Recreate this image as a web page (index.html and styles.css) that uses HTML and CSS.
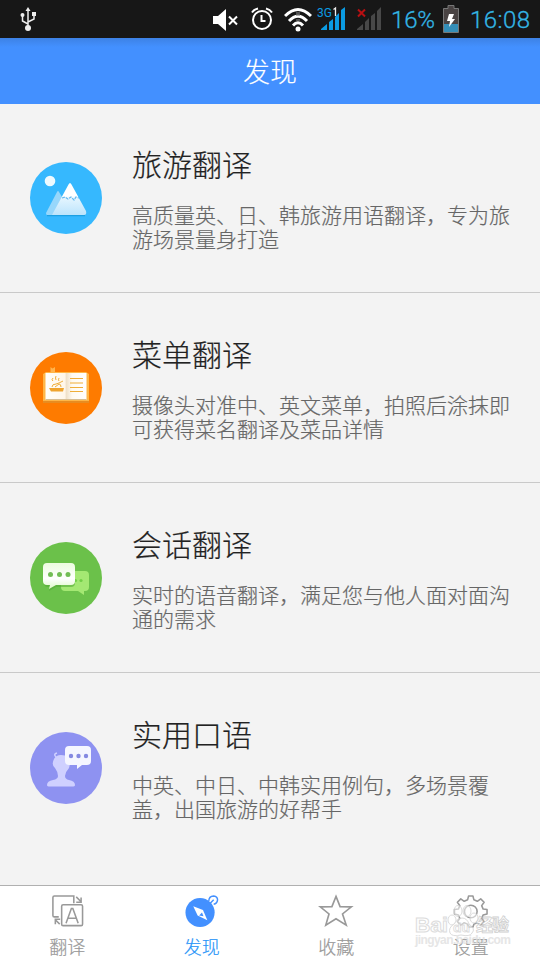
FILE: index.html
```
<!DOCTYPE html>
<html lang="zh-CN">
<head>
<meta charset="utf-8">
<title>发现</title>
<link rel="stylesheet" href="styles.css">
</head>
<body>
<div class="phone">
  <div class="status">
    <svg class="usb" width="18" height="26" viewBox="0 0 18 26" fill="none" stroke="#eee" stroke-width="1.5">
      <path d="M9 22V4M9 18L3.500 15V9M9 16L15 13V8"/><path d="M9 1L6.500 5h5z" fill="#eee" stroke="none"/><circle cx="9" cy="22" r="3" fill="#eee" stroke="none"/><circle cx="3.500" cy="9" r="2" fill="#eee" stroke="none"/><path d="M13 6h4v4h-4z" fill="#eee" stroke="none"/>
    </svg>
    <svg class="mute" width="25" height="24" viewBox="0 0 25 24">
      <path d="M0 8h5l8-7v22l-8-7H0z" fill="#fff"/><path d="M16 8.500l8 8M24 8.500l-8 8" stroke="#fff" stroke-width="2"/>
    </svg>
    <svg class="alarm" width="22" height="24" viewBox="0 0 22 24" fill="none" stroke="#fff" stroke-width="2">
      <circle cx="11" cy="13" r="9"/><path d="M10.500 8v6h4M1 5.500Q3 2.500 7 1.500M21 5.500Q19 2.500 15 1.500"/>
    </svg>
    <svg class="wifi" width="28" height="25" viewBox="0 0 28 25" fill="none" stroke="#fff" stroke-width="3">
      <path d="M1 9Q14-4 27 9M5 14Q14 4.500 23 14M9 18.500Q14 13 19 18.500"/><circle cx="14" cy="22" r="2.500" fill="#fff" stroke="none"/><path d="M12 5h4v4h-4zM12 12h4v2h-4z" fill="#777" stroke="none" opacity=".6"/>
    </svg>
    <svg class="signal" width="29" height="26" viewBox="0 0 29 26">
      <path d="M4 25v-1l6-5v6zM12 25v-8l4-3v11zM18 25V12l4-4v17zM24 25V5l4-3v23z" fill="#0b9be2"/>
      <text x="0" y="12" class="net" textLength="15">3G</text><path d="M16.500 4.500l2-1.500v8" fill="none" stroke="#eee" stroke-width="1.300"/>
    </svg>
    <svg class="nosignal" width="25" height="26" viewBox="0 0 25 26">
      <path d="M0 25v-1l6-5v6zM8 25v-8l4-4v12zM14 25V11l4-3v17zM20 25V6l4-4v23z" fill="#484848"/><path d="M1 4.500l7 7M8 4.500l-7 7" stroke="#b80f12" stroke-width="2"/>
    </svg>
    <svg class="percent" width="46" height="32"><text x="0" y="24" class="clock" textLength="44">16%</text></svg>
    <svg class="battery" width="16" height="28" viewBox="0 0 16 28">
      <path d="M5 .5h6v3h4.500v24H.5v-24H5z" fill="#494343" stroke="#777" /><path d="M1 19h14v8H1z" fill="#348eb8"/><path d="M6 9h5l-2 5h3l-6 8 1-6H4z" fill="#fff"/>
    </svg>
    <svg class="time" width="66" height="32"><text x="0" y="24" class="clock" textLength="60">16:08</text></svg>
  </div>
  <header class="header">发现</header>
  <main class="list">
    <section class="row">
      <svg class="badge" viewBox="0 0 72 72">
        <defs><linearGradient id="snow" x2="0" y2="1"><stop stop-color="#fff"/><stop offset=".4" stop-color="#fff"/><stop offset=".5" stop-color="#e2f4fe"/><stop offset="1" stop-color="#bce4fc"/></linearGradient></defs>
        <circle cx="36" cy="36" r="36" fill="#36b8fe"/><circle cx="20" cy="19" r="5.300" fill="#eefaff"/>
        <path d="M17 53q-1 0-1-2l11-21q1-2 2 0l6 10-7 13z" fill="#97d7fb"/>
        <path d="M38.500 22.500q1.500-3 3 0L56 49q1 4-2 4H22z" fill="url(#snow)"/><path d="M17 53.700h38" stroke="#179bdd" stroke-width="1"/>
        <path d="M32 36l3-1 3 2 3-2 3 3 2-3 3 1" fill="none" stroke="#66baf0" stroke-width="1.300" stroke-dasharray="3 1"/>
      </svg>
      <div class="copy"><h2>旅游翻译</h2><p>高质量英、日、韩旅游用语翻译，专为旅<br>游场景量身打造</p></div>
    </section>
    <section class="row">
      <svg class="badge" viewBox="0 0 72 72">
        <defs><linearGradient id="page"><stop stop-color="#fffefa"/><stop offset=".48" stop-color="#fff6e8"/><stop offset=".5" stop-color="#eedfc6"/><stop offset=".65" stop-color="#fffaf1"/><stop offset="1" stop-color="#fff"/></linearGradient></defs>
        <circle cx="36" cy="36" r="36" fill="#fe7b00"/><path d="M20.500 15l2 1.500 2.500-1.500v7h-4.500z" fill="#ffb44d"/>
        <path d="M13 22l3-2h40l3 2v29H13z" fill="#ffb647"/><path d="M13 49h46v2H13z" fill="#e78c21"/><path d="M15.500 21h41v27h-41z" fill="url(#page)"/><path d="M15.500 47.500h41" stroke="#d7bd91"/>
        <path d="M40 26.500h13M40 31h13M40 35.500h13M40 39.500h13" stroke="#efae39" stroke-width="1.100"/>
        <path d="M19 36h15l-1 3.500H21z" fill="#efa42e"/><path d="M22 35q0-3 4-3l3-1 4-2M25 35l4-3q2 0 2 3M23 29q-2-1 0-3M26 28q-1-2 0-4M29 29q-1-1 0-3" fill="none" stroke="#efae39"/>
      </svg>
      <div class="copy"><h2>菜单翻译</h2><p>摄像头对准中、英文菜单，拍照后涂抹即<br>可获得菜名翻译及菜品详情</p></div>
    </section>
    <section class="row">
      <svg class="badge" viewBox="0 0 72 72">
        <defs><linearGradient id="mint" x2="0" y2="1"><stop stop-color="#ecfcdf"/><stop offset=".6" stop-color="#fff"/><stop offset="1" stop-color="#dcf8c4"/></linearGradient></defs>
        <circle cx="36" cy="36" r="36" fill="#6bc14a"/>
        <path d="M35 29h20q4 0 4 4v12q0 4-4 4h-1v4l-6-4H35q-4 0-4-4V33q0-4 4-4z" fill="#a4e873"/><circle cx="45.500" cy="38.500" r="1.600" fill="#72cf48"/><circle cx="51" cy="38.500" r="1.600" fill="#72cf48"/>
        <path d="M18 21h23q4 0 4 4v15q0 4-4 4H26l-7 4 1-4h-2q-4 0-4-4V25q0-4 4-4z" fill="#54aa36" opacity=".6" transform="translate(0 1)"/>
        <path d="M17 21h24q4 0 4 4v14q0 4-4 4H26l-7 4 1-4h-3q-4 0-4-4V25q0-4 4-4z" fill="url(#mint)"/>
        <g fill="#72bd55"><circle cx="20.500" cy="32.500" r="2.500"/><circle cx="29.500" cy="32.500" r="2.500"/><circle cx="38" cy="32.500" r="2.500"/></g>
      </svg>
      <div class="copy"><h2>会话翻译</h2><p>实时的语音翻译，满足您与他人面对面沟<br>通的需求</p></div>
    </section>
    <section class="row">
      <svg class="badge" viewBox="0 0 72 72">
        <circle cx="36" cy="36" r="36" fill="#8e92f1"/>
        <path d="M24 27q2-4 7-4 9 0 9 9l-1 4q-3 3-4 8 0 3 4 4 6 1 6 5 0 1.500-3 1.500H20q-3 0-3-1.500 0-4 6-5 5-1 5-4 0-4-3-8-4-3-1-9z" fill="#cfd0ff"/><path d="M26 25q-3-3 1-4" stroke="#cfd0ff" stroke-width="1.500" fill="none"/>
        <path d="M39 14h18q4 0 4 4v11q0 4-4 4h-5l-5 4v-4h-8q-4 0-4-4V18q0-4 4-4z" fill="#f5f6ff"/>
        <g fill="#8589e2"><circle cx="41" cy="24" r="2.200"/><circle cx="48.500" cy="24" r="2.200"/><circle cx="56" cy="24" r="2.200"/></g>
      </svg>
      <div class="copy"><h2>实用口语</h2><p>中英、中日、中韩实用例句，多场景覆<br>盖，出国旅游的好帮手</p></div>
    </section>
  </main>
  <nav class="tabs">
    <div class="tab">
      <svg viewBox="0 0 36 36" fill="none" stroke="#999" stroke-width="1.600"><path d="M9.500 23.500H5q-1.500 0-1.500-1.500V3.500q0-1.500 1.500-1.500h20v7.500"/><rect x="12.500" y="11" width="21.500" height="21.500" rx="1.500"/><path d="M17 30l5.500-15h1.500L29.500 30M19 25h8.500M27.500 3l5 5M32.500 3.500V8.500h-5M10.500 31l-4-4M6 31v-5h5"/></svg>
      <span>翻译</span>
    </div>
    <div class="tab active">
      <svg viewBox="0 0 36 36"><circle cx="16" cy="19" r="15" fill="#4390ff"/><path d="M9 12.500l10 4L23.500 27l-10-5z" fill="#fff"/><path d="M15 22l3-3 1.500 4z" fill="#4390ff"/><path d="M25 7.500q0-5.500 5-5.500 4 .5 4 4-.5 4-4 4.500M26.500 9.500l3.500-3.500" fill="none" stroke="#4390ff" stroke-width="1.500"/></svg>
      <span>发现</span>
    </div>
    <div class="tab">
      <svg viewBox="0 0 36 36" fill="none" stroke="#999" stroke-width="1.700"><path d="M18 2.500l4.200 10.500 11.600.2-9.100 7.300L28.500 32 18 25.500 7.500 32l3.300-11.500-9-7.300 12-.2z"/></svg>
      <span>收藏</span>
    </div>
    <div class="tab">
      <svg viewBox="0 0 36 36" fill="none" stroke="#999" stroke-width="1.600"><path d="M15.500 2h4.500l1 4 3.500 1.500L28 5l3.500 3.500-2.500 3.500 1.500 3.500 4 .5v4.500l-4 1-1.500 3.500 2.500 3.500L28 32l-3.500-2.500-3.500 1.500-1 3h-4.500l-1-3-3.500-1.500L7.500 32 4 28.500 6.500 25 5 21.500l-4-1V16l4-.5L6.500 12 4 8.500 7.500 5 11 7.500 14.500 6z" stroke-linejoin="round"/><circle cx="17.800" cy="18" r="6.500"/></svg>
      <span>设置</span>
    </div>
  </nav>
  <svg class="watermark" width="100" height="56" viewBox="0 0 100 56">
    <g class="paw"><ellipse cx="38" cy="20" rx="4" ry="5"/><ellipse cx="44" cy="11" rx="4" ry="5.500"/><ellipse cx="53" cy="11" rx="4" ry="5.500"/><ellipse cx="60" cy="18" rx="4" ry="5"/><path d="M48 18q5 0 7 6 7 5 3 9-2 4-11 2-9 2-11-2-2-5 4-9 3-6 8-6z"/></g>
    <text x="1" y="32" class="brand" textLength="33" lengthAdjust="spacingAndGlyphs">Bai</text><text x="39" y="32" class="du" textLength="17" lengthAdjust="spacingAndGlyphs">du</text><text x="62" y="31" class="exp" textLength="33">经验</text><text x="1" y="44" class="site" textLength="96">jingyan.baidu.com</text>
  </svg>
</div>
</body>
</html>
```
FILE: styles.css
```
* { box-sizing: border-box; }
body { margin: 0; font-family: "Noto Sans CJK SC", sans-serif; font-weight: 300; }
.phone { position: relative; width: 540px; height: 960px; display: flex; flex-direction: column; background: #f3f3f3; overflow: hidden; }
.status { height: 38px; background: #171717; display: flex; align-items: flex-start; flex: none; }
.status svg { flex: none; }
.usb { margin: 6px 0 0 18.5px; }
.mute { margin: 8px 0 0 176.5px; }
.alarm { margin: 7px 0 0 12.5px; }
.wifi { margin: 7px 0 0 11.5px; }
.signal { margin: 5px 0 0 5px; }
.nosignal { margin: 5px 0 0 11px; }
.percent { margin: 4px 0 0 9px; }
.battery { margin: 5px 0 0 6px; }
.time { margin: 4px 0 0 11px; }
.clock { font: 300 24px Roboto, sans-serif; fill: #33b5e5; stroke: #33b5e5; stroke-width: .3px; }
.net { font: 400 12px Roboto, sans-serif; fill: #0b9be2; }
.header { height: 66px; flex: none; background: linear-gradient(#3d82e5, #4390ff 9px); color: #fff; font-size: 27px; line-height: 66px; text-align: center; -webkit-text-stroke: .15px; }
.list { flex: 1; }
.row { height: 190px; display: flex; padding: 58px 0 0 30px; border-bottom: 1px solid #c9c9c9; }
.row:first-child { height: 189px; }
.row + .row { padding-top: 59px; }
.row:last-child { border-bottom: 0; }
.badge { width: 72px; height: 72px; flex: none; }
.copy { margin: -21px 0 0 30px; white-space: nowrap; }
h2 { margin: 0; font-size: 30px; line-height: 44px; font-weight: 300; color: #222; -webkit-text-stroke: .2px; }
p { margin: 17px 0 0; font-size: 21px; line-height: 24px; color: #666; -webkit-text-stroke: .2px; }
.tabs { height: 75px; flex: none; display: flex; background: #fff; border-top: 1px solid #b0b0b0; }
.tab { width: 134.5px; display: flex; flex-direction: column; align-items: center; padding-top: 8px; color: #999; font-size: 18px; line-height: 27px; -webkit-text-stroke: .2px; }
.tab svg { width: 36px; height: 36px; margin-bottom: 4px; }
.active { color: #2795f8; }
.watermark { position: absolute; left: 414px; top: 900px; opacity: .8; }
.watermark text, .paw { fill: #fff; stroke: #d4d4d4; stroke-width: 1px; }
.paw { fill-opacity: .65; }
.brand { font: 700 21px "Liberation Sans", sans-serif; }
.watermark .du { font: 700 13px "Liberation Sans", sans-serif; stroke-width: .8px; }
.watermark .exp { font: 700 17px "Noto Sans CJK SC", sans-serif; stroke: #c4c4c4; stroke-width: .8px; }
.watermark .site { font: 700 12px "Liberation Sans", sans-serif; fill: #e0e0e0; stroke: none; }
```
